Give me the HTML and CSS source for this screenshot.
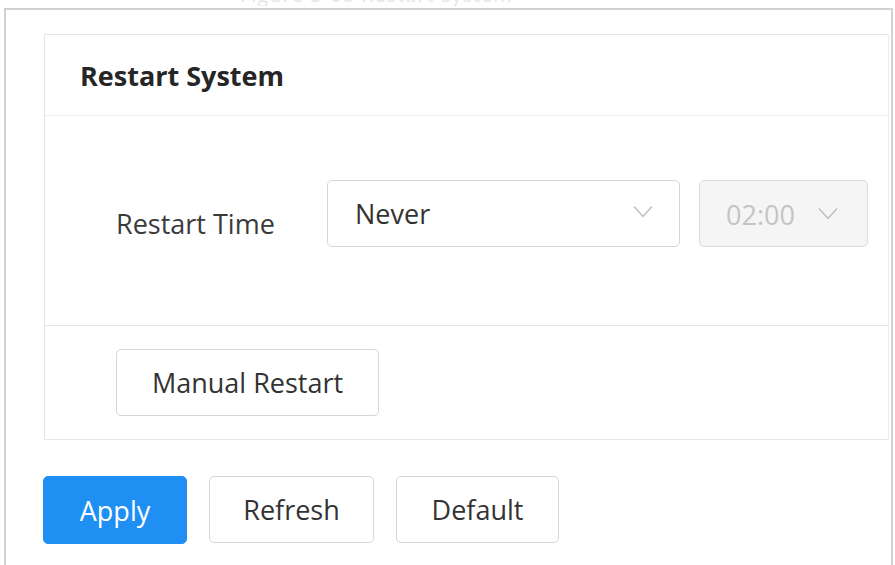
FILE: index.html
```html
<!DOCTYPE html>
<html lang="en">

<head>
  <meta charset="UTF-8">
  <meta name="viewport" content="width=device-width, initial-scale=1.0">
  <title>Restart System</title>
  <link rel="stylesheet" href="styles.css">
</head>

<body>
  <!-- 잘린 캡션 -->
  <div class="caption">
    <span>Figure 5-68 Restart system</span>
  </div>

  <div class="frame">
    <!-- 재시작 카드 -->
    <section class="card">
      <div class="card-header">Restart System</div>

      <div class="card-body">
        <label class="field-label">Restart Time</label>
        <div class="select">
          <span>Never</span>
          <svg class="chevron" viewBox="0 0 20 12"><path d="M1 1 L10 11 L19 1" /></svg>
        </div>
        <div class="select time disabled">
          <span>02:00</span>
          <svg class="chevron" viewBox="0 0 20 12"><path d="M1 1 L10 11 L19 1" /></svg>
        </div>
      </div>

      <div class="card-footer">
        <button class="btn btn-manual">Manual Restart</button>
      </div>
    </section>

    <!-- 하단 버튼 -->
    <div class="actions">
      <button class="btn btn-primary btn-apply">Apply</button>
      <button class="btn btn-refresh">Refresh</button>
      <button class="btn btn-default">Default</button>
    </div>
  </div>
</body>

</html>
```

FILE: styles.css
```css
* {
  margin: 0;
  padding: 0;
  box-sizing: border-box;
}

body {
  font-family: "Open Sans", "Liberation Sans", sans-serif;
  background: #fff;
  color: #333;
  overflow: hidden;
}

/* 위쪽 잘린 캡션 */
.caption {
  height: 6px;
  overflow: hidden;
  padding-left: 240px;
}

.caption span {
  display: block;
  margin-top: -15px;
  font-size: 20px;
  line-height: 20px;
  color: #e6e6e6;
  letter-spacing: 1px;
}

.frame {
  margin-left: 4px;
  margin-top: 2px;
  width: 889px;
  height: 557px;
  border: 2px solid #d2d2d2;
  border-bottom: none;
  padding: 24px 0 0 38px;
}

.card {
  border: 1px solid #e6e6e6;
  border-right-color: #ededed;
  width: 845px;
}

.card-header {
  height: 81px;
  padding-left: 35px;
  display: flex;
  align-items: center;
  font-size: 27px;
  font-weight: 700;
  color: #262626;
  border-bottom: 1px solid #ececec;
}

.card-body {
  height: 210px;
  display: flex;
  align-items: center;
  padding-left: 71px;
  padding-bottom: 14px;
  border-bottom: 1px solid #e6e6e6;
}

.field-label {
  width: 211px;
  font-size: 27px;
  color: #3a3a3a;
  padding-top: 20px;
}

.select {
  width: 353px;
  height: 67px;
  border: 1px solid #d6d6d6;
  border-radius: 5px;
  display: flex;
  align-items: center;
  justify-content: space-between;
  padding: 0 26px 0 27px;
  font-size: 27px;
  color: #333;
}

.select .chevron {
  margin-top: -4px;
}

.select.time {
  width: 169px;
  margin-left: 19px;
  padding: 2px 29px 0 26px;
}

.select.disabled {
  background: #f5f5f5;
  color: #c4c4c4;
  border-color: #dcdcdc;
}

.chevron {
  width: 20px;
  height: 13px;
  fill: none;
  stroke: #bdbdbd;
  stroke-width: 1.4;
}

.select.time .chevron {
  margin-top: -2px;
}

.card-footer {
  height: 113px;
  display: flex;
  align-items: center;
  padding-left: 71px;
}

.btn {
  font-family: inherit;
  font-size: 27px;
  color: #333;
  background: #fff;
  border: 1px solid #d6d6d6;
  border-radius: 5px;
  height: 67px;
  cursor: pointer;
}

.btn-manual {
  width: 263px;
}

.actions {
  display: flex;
  gap: 22px;
  margin-top: 36px;
  margin-left: -1px;
}

.btn-primary {
  background: #1f8ff3;
  border-color: #1f8ff3;
  color: #fff;
}

.btn-apply {
  width: 144px;
  height: 68px;
}

.btn-refresh {
  width: 165px;
}

.btn-default {
  width: 163px;
}
```
